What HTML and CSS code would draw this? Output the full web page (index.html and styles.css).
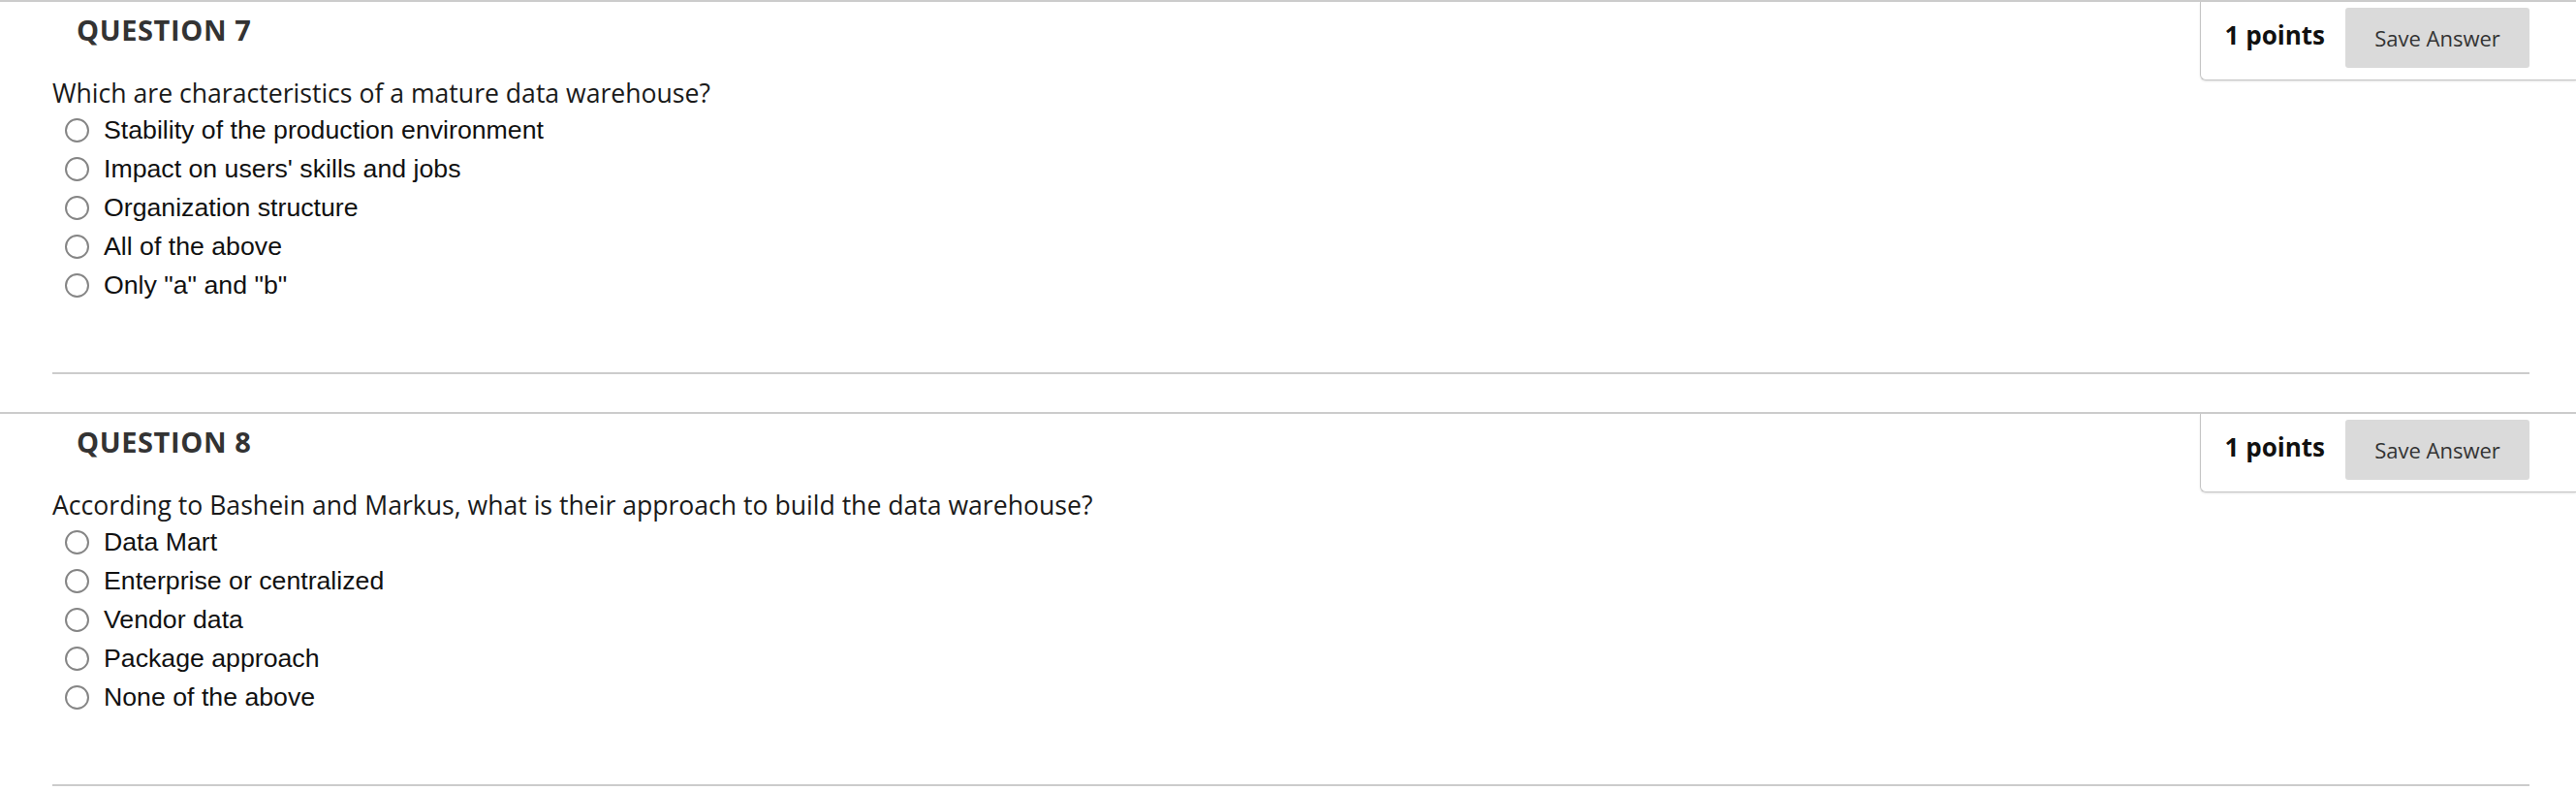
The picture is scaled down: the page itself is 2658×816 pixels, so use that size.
FILE: index.html
```html
<!DOCTYPE html>
<html lang="en">
<head>
<meta charset="utf-8">
<title>Quiz</title>
<link rel="stylesheet" href="styles.css">
</head>
<body>
<div class="quiz">
  <section class="question">
    <h3 class="q-title">QUESTION 7</h3>
    <div class="q-panel">
      <span class="q-points">1 points</span>
      <button class="q-save" type="button">Save Answer</button>
    </div>
    <div class="q-body">
      <p class="q-text">Which are characteristics of a mature data warehouse?</p>
      <ul class="q-options">
        <li class="q-option"><input class="q-radio" type="radio" name="q7"><span>Stability of the production environment</span></li>
        <li class="q-option"><input class="q-radio" type="radio" name="q7"><span>Impact on users' skills and jobs</span></li>
        <li class="q-option"><input class="q-radio" type="radio" name="q7"><span>Organization structure</span></li>
        <li class="q-option"><input class="q-radio" type="radio" name="q7"><span>All of the above</span></li>
        <li class="q-option"><input class="q-radio" type="radio" name="q7"><span>Only "a" and "b"</span></li>
      </ul>
    </div>
    <hr class="q-sep">
  </section>
  <section class="question">
    <h3 class="q-title">QUESTION 8</h3>
    <div class="q-panel">
      <span class="q-points">1 points</span>
      <button class="q-save" type="button">Save Answer</button>
    </div>
    <div class="q-body">
      <p class="q-text">According to Bashein and Markus, what is their approach to build the data warehouse?</p>
      <ul class="q-options">
        <li class="q-option"><input class="q-radio" type="radio" name="q8"><span>Data Mart</span></li>
        <li class="q-option"><input class="q-radio" type="radio" name="q8"><span>Enterprise or centralized</span></li>
        <li class="q-option"><input class="q-radio" type="radio" name="q8"><span>Vendor data</span></li>
        <li class="q-option"><input class="q-radio" type="radio" name="q8"><span>Package approach</span></li>
        <li class="q-option"><input class="q-radio" type="radio" name="q8"><span>None of the above</span></li>
      </ul>
    </div>
    <hr class="q-sep">
  </section>
</div>
</body>
</html>
```
FILE: styles.css
```css
* { box-sizing: border-box; }
html, body { margin: 0; padding: 0; background: #fff; }
body { font-family: "Open Sans", "Liberation Sans", sans-serif; color: #222; }

.quiz { display: flex; flex-direction: column; }

.question {
  display: grid;
  grid-template-columns: 1fr auto;
  grid-template-rows: auto auto auto;
  border-top: 2px solid #cccccc;
  padding-left: 54px;
  padding-bottom: 39px;
}

.q-title {
  grid-column: 1;
  grid-row: 1;
  margin: 10px 0 0 25px;
  font-size: 29px;
  line-height: 38px;
  letter-spacing: 0.6px;
  font-weight: 700;
  color: #333;
}

.q-panel {
  grid-column: 2;
  grid-row: 1 / span 2;
  align-self: start;
  display: flex;
  align-items: center;
  gap: 21px;
  height: 81px;
  padding: 6px 48px 13px 25px;
  border-left: 1px solid #c6c6c6;
  border-bottom: 1px solid #c6c6c6;
  border-bottom-left-radius: 6px;
  box-shadow: 0 1px 2px rgba(0, 0, 0, 0.12);
}

.q-points {
  font-size: 26px;
  font-weight: 700;
  color: #111;
  white-space: nowrap;
  margin-top: -5px;
}

.q-save {
  width: 190px;
  height: 62px;
  border: none;
  border-radius: 3px;
  background: #dadada;
  font-family: "Open Sans", sans-serif;
  font-size: 22px;
  color: #333;
  padding: 0;
  white-space: nowrap;
}

.q-body {
  grid-column: 1;
  grid-row: 2;
}

.q-text {
  margin: 30px 0 0 0;
  font-size: 26.6px;
  line-height: 32px;
  color: #1a1a1a;
}

.q-options {
  list-style: none;
  margin: 2px 0 0 13px;
  padding: 0;
}

.q-option {
  display: flex;
  align-items: center;
  gap: 15px;
  height: 40px;
  font-family: "Liberation Sans", Arial, sans-serif;
  font-size: 26.7px;
  line-height: 40px;
  color: #111;
}

.q-radio {
  appearance: none;
  -webkit-appearance: none;
  width: 25px;
  height: 25px;
  margin: 0;
  border: 2px solid #858585;
  border-radius: 50%;
  background: #fff;
  flex: none;
}

.q-sep {
  grid-column: 1 / span 2;
  grid-row: 3;
  margin: 70px 48px 0 0;
  border: none;
  height: 2px;
  background: #cccccc;
}
```
